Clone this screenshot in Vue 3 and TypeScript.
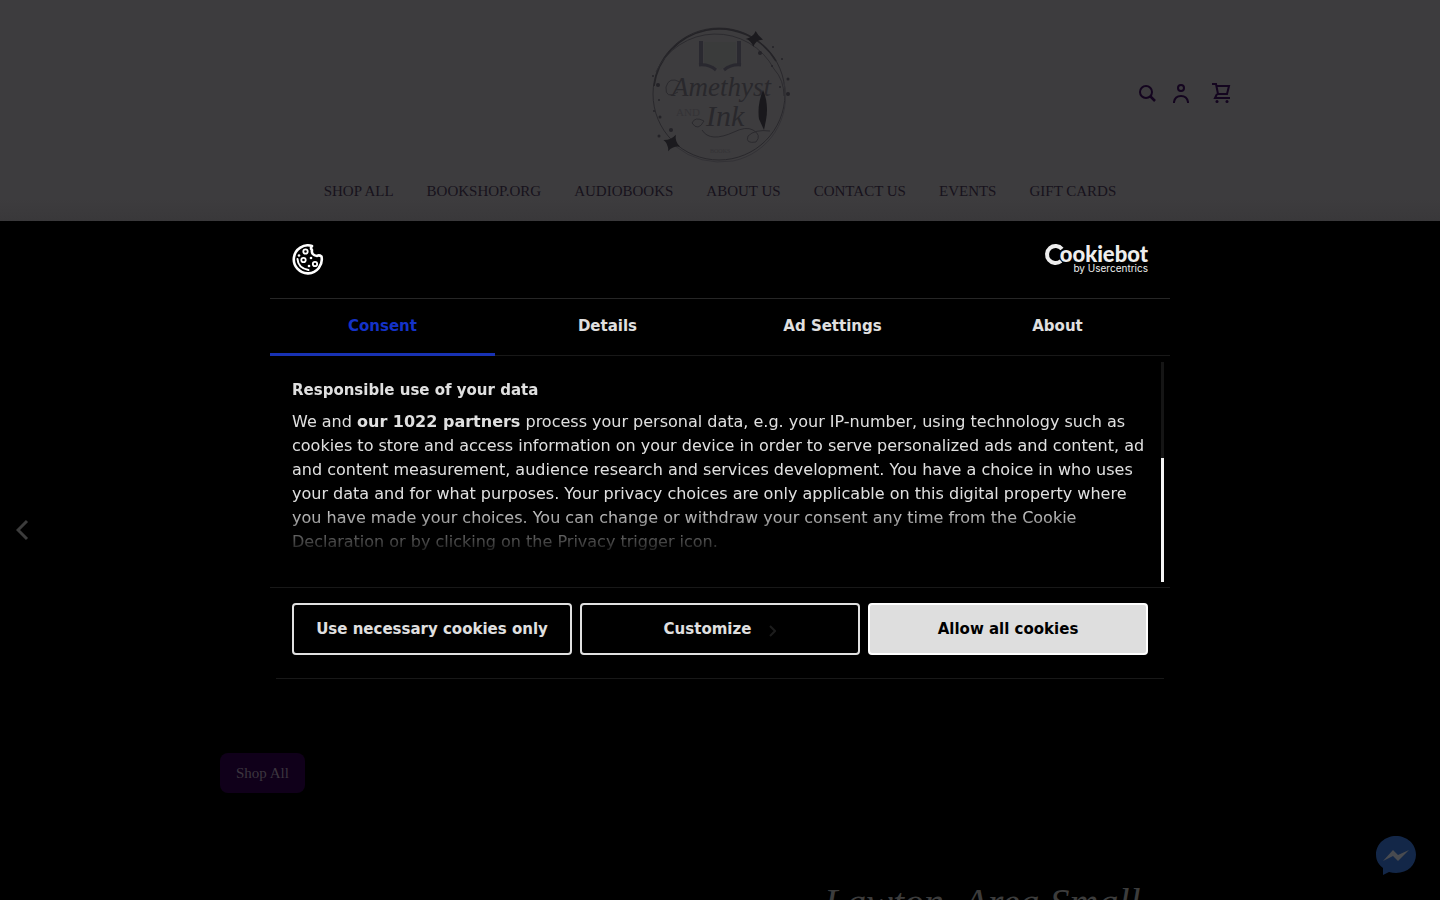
<script setup lang="ts">
import { ref } from 'vue'

const navItems: string[] = ['Shop All', 'Bookshop.org', 'Audiobooks', 'About Us', 'Contact Us', 'Events', 'Gift Cards']
const tabs: string[] = ['Consent', 'Details', 'Ad Settings', 'About']
const activeTab = ref<string>('Consent')
</script>

<template>
  <div class="page">
    <header class="site-header">
      <div class="brand-row">
        <a class="brand" href="#" aria-label="Amethyst and Ink Books">
          <svg width="144" height="144" viewBox="0 0 144 144" fill="none">
            <circle cx="71" cy="70" r="66" stroke="#29282c" />
            <path d="M6 62A66 66 0 0 1 128 37" stroke="#242327" stroke-width="1.5" />
            <path d="M8 48A66 66 0 0 1 126 45Q136 56 136 72" stroke="#2c2b2f" />
            <path d="M136 58A66 66 0 0 1 85 137Q52 142 27 122" stroke="#333236" />
            <path d="M53 17V42M91 17V42" stroke="#2a2930" stroke-width="4" />
            <path d="M56 18V40Q67 41 72 46Q77 41 88 40V18" fill="#3a3b3b" />
            <path d="M51 41Q61 40 68 46M93 41Q83 40 76 46" stroke="#29282f" stroke-width="3" />
            <path d="M106 7Q109 11 115 14Q108 15 107 23Q103 17 98 17Q105 13 106 7Z" fill="#1b1a1e" transform="rotate(12 107 15)" />
            <path d="M24 110Q26 117 33 119Q26 121 24 128Q21 121 15 120Q22 117 24 110Z" fill="#1b1a1e" transform="rotate(25 24 119)" />
            <g fill="#242328">
              <circle cx="112" cy="29" r="2" /><circle cx="125" cy="23" r="1" /><circle cx="134" cy="35" r="1" />
              <circle cx="124" cy="42" r="1" /><circle cx="140" cy="55" r="1.500" /><circle cx="140" cy="70" r="2" />
              <circle cx="132" cy="63" r="1" /><circle cx="5" cy="52" r="1" /><circle cx="10" cy="61" r="2" />
              <circle cx="11" cy="76" r="1" /><circle cx="6" cy="87" r="1" /><circle cx="12" cy="93" r="1.500" />
              <circle cx="23" cy="106" r="2" /><circle cx="11" cy="112" r="1.500" />
            </g>
            <g class="brand-script">
              <text x="24" y="72" font-size="27">Amethyst</text>
              <text x="58" y="102" font-size="30">Ink</text>
            </g>
            <text class="brand-small" x="28" y="92" font-size="11">AND</text>
            <text class="brand-small" x="62" y="129" font-size="6">BOOKS</text>
            <path d="M30 68Q17 76 18 63Q21 52 32 58M44 99Q47 92 56 97Q50 108 44 99M54 106Q62 119 86 108Q98 102 105 106Q114 111 108 118Q97 120 100 112Q107 105 122 107" stroke="#2b2a2e" />
            <path d="M115 66Q109 81 111 95L116 106L118 96Q121 80 115 66Z" fill="#19181c" />
          </svg>
        </a>
        <div class="header-icons">
          <button class="icon-button" type="button" aria-label="Search">
            <svg width="20" height="22" viewBox="0 0 20 22" fill="none" stroke="#14051f" stroke-width="2">
              <circle cx="8" cy="10" r="6" /><path d="M12 14L17 19" stroke-width="2.500" />
            </svg>
          </button>
          <button class="icon-button" type="button" aria-label="Account">
            <svg width="20" height="22" viewBox="0 0 20 22" fill="none" stroke="#14051f" stroke-width="2">
              <circle cx="9" cy="6" r="3" /><path d="M2 21V20Q3 14 9 14Q15 14 16 20V21" />
            </svg>
          </button>
          <button class="icon-button cart" type="button" aria-label="Cart">
            <svg width="20" height="22" viewBox="0 0 20 22" fill="none" stroke="#14051f" stroke-width="2">
              <path d="M0 2H4L6 12H15L17 4H5M5 12L3 16H18" />
              <circle cx="5" cy="19.500" r="1.500" fill="#14051f" stroke="none" /><circle cx="15" cy="19.500" r="1.500" fill="#14051f" stroke="none" />
            </svg>
          </button>
        </div>
      </div>
      <nav class="main-nav">
        <a v-for="item in navItems" :key="item" href="#">{{ item }}</a>
      </nav>
    </header>

    <main class="hero">
      <button class="previous" type="button" aria-label="Previous slide">
        <svg width="14" height="22" viewBox="0 0 14 22" fill="none" stroke="#3c3c3c" stroke-width="3"><path d="M11 2L2 11L11 20" /></svg>
      </button>
      <div class="hero-copy"><a class="shop" href="#">Shop All</a></div>
      <h1 class="hero-title">Lawton, Area Small</h1>
    </main>

    <button class="messenger" type="button" aria-label="Messenger">
      <svg width="40" height="40" viewBox="0 0 40 40">
        <path d="M20 0C9 0 0 8 0 18.500C0 25 3 29 7 32V39L13 36C28 40 40 31 40 18.500C40 8 31 0 20 0Z" fill="#132748" />
        <path d="M7 25L17 14L22 19L33 14L22 25L17 20Z" fill="#494b50" />
      </svg>
    </button>

    <section class="consent" role="dialog" aria-modal="true" aria-label="Cookie consent">
      <div class="consent-head">
        <svg width="32" height="32" viewBox="0 0 32 32" fill="none" stroke="#fff">
          <path d="M20 2A14 14 0 1 0 29.500 12.500Q27 10.500 25 12Q19 11 20 6Q18 4 20 2Z" stroke-width="2.600" stroke-linejoin="round" />
          <path d="M5.500 15Q6 24 16.500 26" stroke-width="2" stroke-linecap="round" />
          <g stroke-width="1.800"><circle cx="13.500" cy="7.500" r="2.200" /><circle cx="11.500" cy="16" r="2.200" /><circle cx="23" cy="20" r="2.200" /></g>
          <g fill="#fff" stroke="none"><circle cx="7" cy="11.500" r="1.300" /><circle cx="19" cy="14" r="1.300" /><circle cx="17" cy="22" r="1.300" /></g>
        </svg>
        <svg class="cookiebot" width="104" height="34" viewBox="0 0 104 34" role="img" aria-label="Cookiebot by Usercentrics">
          <path d="M18 5A8.500 8.500 0 1 0 17 17" fill="none" stroke="#eee" stroke-width="4" />
          <text x="104" y="18" class="bot-name" text-anchor="end">ookiebot</text>
          <text x="104" y="28" class="bot-by" text-anchor="end">by Usercentrics</text>
        </svg>
      </div>
      <div class="tabs" role="tablist">
        <button
          v-for="tab in tabs" :key="tab" type="button" role="tab"
          :aria-selected="tab === activeTab" :class="{ active: tab === activeTab }" @click="activeTab = tab"
        >{{ tab }}</button>
      </div>
      <div class="consent-body">
        <div class="consent-text">
          <h2>Responsible use of your data</h2>
          <p>
            We and <strong>our 1022 partners</strong> process your personal data, e.g. your IP-number, using technology such as<br>
            cookies to store and access information on your device in order to serve personalized ads and content, ad<br>
            and content measurement, audience research and services development. You have a choice in who uses<br>
            your data and for what purposes. Your privacy choices are only applicable on this digital property where<br>
            you have made your choices. You can change or withdraw your consent any time from the Cookie<br>
            Declaration or by clicking on the Privacy trigger icon.
          </p>
        </div>
        <div class="scroll-track"><div class="scroll-thumb"></div></div>
      </div>
      <div class="actions">
        <button type="button">Use necessary cookies only</button>
        <button type="button">Customize
          <svg width="7" height="12" viewBox="0 0 7 12" fill="none" stroke="#1c1c1c" stroke-width="2"><path d="M1 1L6 6L1 11" /></svg>
        </button>
        <button class="allow" type="button">Allow all cookies</button>
      </div>
    </section>
  </div>
</template>

<style>
body { margin: 0; background: #000; }
</style>

<style scoped>
* { box-sizing: border-box; }
button { margin: 0; padding: 0; border: 0; background: none; font: inherit; cursor: pointer; }
a { text-decoration: none; }
svg { display: block; flex: none; }
.page { height: 100vh; display: flex; flex-direction: column; overflow: hidden; background: #000; font-family: "Liberation Serif", serif; }
.site-header { flex: none; padding: 24px 208px 20px; background: linear-gradient(#3d3c3e 90%, #39383a); }
.brand-row { display: grid; grid-template-columns: 1fr auto 1fr; height: 144px; }
.brand { grid-column: 2; }
.brand-script { font-family: "Liberation Serif", serif; font-style: italic; fill: #29282c; }
.brand-small { font-family: "Liberation Serif", serif; fill: #343336; }
.header-icons { display: flex; justify-content: flex-end; align-items: center; gap: 14px; padding-bottom: 6px; }
.cart { margin-left: 6px; }
.main-nav { display: flex; justify-content: center; gap: 33px; padding-top: 13px; }
.main-nav a { font-size: 15px; line-height: 20px; color: #17121c; text-transform: uppercase; white-space: nowrap; }
.hero { flex: 1; min-height: 0; display: grid; grid-template-columns: 220px 1fr 1fr 220px; grid-template-rows: 618px 60px; }
.previous { grid-row: 1; justify-self: start; align-self: center; padding-left: 16px; }
.hero-copy { grid-column: 2; grid-row: 1; padding-top: 532px; }
.shop { display: inline-block; padding: 0 16px; border-radius: 8px; background: #10001a; color: #3c363f; font-size: 15px; line-height: 40px; }
.hero-title { grid-column: 3 / 5; grid-row: 2; margin: 40px 0 0 104px; font-size: 40px; font-weight: 400; font-style: italic; line-height: 48px; color: #3c3c3c; white-space: nowrap; }
.messenger { position: fixed; right: 24px; bottom: 24px; }
.consent { position: fixed; top: 50%; left: 50%; transform: translate(-50%, -50%); width: 900px; max-width: 100%; background: #000; color: #e0e0e0; font-family: "DejaVu Sans", sans-serif; font-size: 15px; }
.consent-head { display: flex; justify-content: space-between; align-items: flex-start; height: 78px; padding: 23px 22px 0; border-bottom: 1px solid #262626; }
.cookiebot { overflow: visible; }
.bot-name { font: 900 22px Lato, sans-serif; fill: #eee; }
.bot-by { font: 400 10px Inter, sans-serif; fill: #eee; }
.tabs { display: grid; grid-template-columns: repeat(4, 1fr); height: 57px; border-bottom: 1px solid #181818; }
.tabs button { color: #e0e0e0; font-weight: 700; line-height: 24px; height: 57px; border-bottom: 3px solid transparent; }
.tabs .active { color: #1432c8; border-color: #1832b4; }
.consent-body { display: flex; justify-content: space-between; height: 232px; padding: 6px 6px 5px 22px; border-bottom: 1px solid #181818; }
.consent-text { padding-top: 16px; -webkit-mask-image: linear-gradient(#000 144px, transparent 196px); mask-image: linear-gradient(#000 144px, transparent 196px); }
.consent-text h2 { margin: 0 0 8px; font-size: 15px; line-height: 24px; }
.consent-text p { margin: 0; font-size: 16px; line-height: 24px; white-space: nowrap; }
.scroll-track { display: flex; flex-direction: column; justify-content: flex-end; width: 3px; background: #151515; }
.scroll-thumb { height: 124px; background: #f4f4f4; }
.actions { display: grid; grid-template-columns: repeat(3, 1fr); gap: 8px; margin: 0 6px; padding: 15px 16px 23px; border-bottom: 1px solid #181818; }
.actions button { display: flex; align-items: center; justify-content: center; gap: 18px; height: 52px; border: 2px solid #e0e0e0; border-radius: 4px; color: #e0e0e0; font-weight: 700; }
.actions svg { margin-top: 4px; }
.actions .allow { border-color: #fff; background: #dedede; color: #000; }
</style>
